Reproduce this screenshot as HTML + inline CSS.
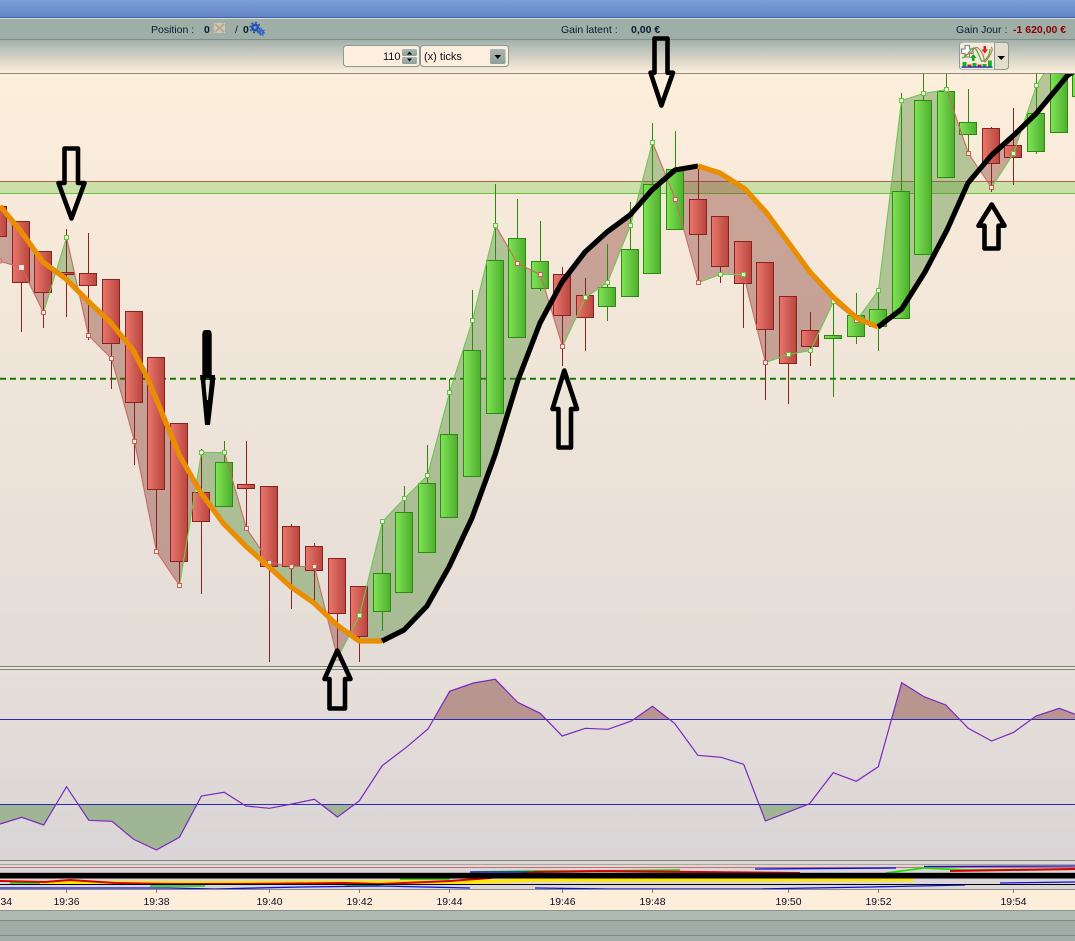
<!DOCTYPE html>
<html><head><meta charset="utf-8"><style>
html,body{margin:0;padding:0;background:#a0aca7;overflow:hidden}
svg{display:block}
text{font-family:"Liberation Sans",sans-serif;font-size:10.5px;fill:#0a1a30}
.b{font-weight:bold}
.f{font-size:11px;fill:#101020}
.ax{text-anchor:middle;font-size:10.4px;fill:#100820}
.r{fill:url(#gr);stroke:#8a2222;stroke-width:1}
.g{fill:url(#gg);stroke:#2a8c0e;stroke-width:1}
.mr{fill:#f5ece4;stroke:#cc5f58;stroke-width:1}
.mg{fill:#f5f5e6;stroke:#60c83c;stroke-width:1}
.ar{fill:none;stroke:#000;stroke-width:4.600;stroke-linejoin:round}
</style></head><body>
<svg width="1075" height="941" viewBox="0 0 1075 941" xmlns="http://www.w3.org/2000/svg">
<defs>
<linearGradient id="top" x1="0" y1="0" x2="0" y2="1"><stop offset="0" stop-color="#7da1d9"/><stop offset="1" stop-color="#6484c5"/></linearGradient>
<linearGradient id="tb" x1="0" y1="0" x2="0" y2="1"><stop offset="0" stop-color="#a3b1ab"/><stop offset="1" stop-color="#fdeedb"/></linearGradient>
<linearGradient id="pl" x1="0" y1="0" x2="0" y2="1"><stop offset="0" stop-color="#fdeedb"/><stop offset="1" stop-color="#e3dcd7"/></linearGradient>
<linearGradient id="p2" x1="0" y1="0" x2="0" y2="1"><stop offset="0" stop-color="#e7dfd9"/><stop offset="1" stop-color="#d9d4d6"/></linearGradient>
<linearGradient id="gr" x1="0" y1="0" x2="1" y2="0"><stop offset="0" stop-color="#ea776c"/><stop offset="1" stop-color="#b8463e"/></linearGradient>
<linearGradient id="gg" x1="0" y1="0" x2="1" y2="0"><stop offset="0" stop-color="#80e455"/><stop offset="1" stop-color="#4eae2e"/></linearGradient>
<linearGradient id="bt" x1="0" y1="0" x2="0" y2="1"><stop offset="0" stop-color="#aab8b3"/><stop offset="1" stop-color="#8e9f9a"/></linearGradient>
<clipPath id="c"><rect x="0" y="74" width="1075" height="592"/></clipPath>
</defs>

<!-- chrome -->
<rect x="0" y="0" width="1075" height="17" fill="url(#top)"/>
<rect x="0" y="17" width="1075" height="1" fill="#3f60ae"/>
<rect x="0" y="18" width="1075" height="1" fill="#d6ddd9"/>
<rect x="0" y="19" width="1075" height="20" fill="#a0aea8"/>
<rect x="0" y="39" width="1075" height="1" fill="#808c86"/>
<rect x="0" y="40" width="1075" height="33" fill="url(#tb)"/>
<rect x="0" y="73" width="1075" height="1" fill="#8a8a80"/>

<text x="151" y="33">Position :</text>
<text x="204" y="33" class="b">0</text>
<rect x="214" y="23" width="11" height="10" fill="#d2c8b4"/>
<path d="M215 24l9 8M224 24l-9 8" stroke="#b3a996" stroke-width="2"/>
<text x="235" y="33">/</text>
<text x="243" y="33" class="b">0</text>
<circle cx="255" cy="27.500" r="2.800" fill="#6a98d8" stroke="#2450b0" stroke-width="2.400"/>
<circle cx="255" cy="27.500" r="5" fill="none" stroke="#2450b0" stroke-width="1.400" stroke-dasharray="2 1.900"/>
<circle cx="261.500" cy="32.200" r="1.800" fill="#6a98d8" stroke="#3060c0" stroke-width="1.600"/>
<circle cx="261.500" cy="32.200" r="3.200" fill="none" stroke="#3060c0" stroke-width="1" stroke-dasharray="1.500 1.300"/>
<text x="561" y="33">Gain latent :</text>
<text x="631" y="33" class="b">0,00 €</text>
<text x="956" y="33">Gain Jour :</text>
<text x="1013" y="33" class="b" style="fill:#8a0000">-1 620,00 €</text>

<!-- spinner + combo -->
<rect x="343.500" y="45.500" width="76" height="21" rx="3" fill="#fdeedd" stroke="#8a9a94"/>
<text class="f" x="400.500" y="60" text-anchor="end">110</text>
<rect x="402" y="49" width="15" height="7" rx="1.500" fill="url(#bt)"/>
<rect x="402" y="57" width="15" height="7" rx="1.500" fill="url(#bt)"/>
<path d="M407 54.500h5l-2.500-3zM407 58.500h5l-2.500 3z" fill="#000"/>
<rect x="420.500" y="45.500" width="88" height="21" rx="3" fill="#fdeedd" stroke="#8a9a94"/>
<text class="f" x="424" y="60">(x) ticks</text>
<rect x="490" y="49" width="15.500" height="15" rx="1.500" fill="url(#bt)"/>
<path d="M494.500 55h6.500l-3.250 4z" fill="#000"/>

<!-- icon button -->
<rect x="959.500" y="42.500" width="49" height="27" rx="3" fill="#e4dfcc" stroke="#8a9a94"/>
<path d="M960 45.500a3 3 0 0 1 3-3h31.500v27H963a3 3 0 0 1-3-3z" fill="#f3ecdc"/>
<line x1="994.500" y1="43" x2="994.500" y2="69" stroke="#8a9a94"/>
<path d="M997.500 56h7.500l-3.750 4z" fill="#000"/>
<path d="M965 45.500h4.500v3.500h3.500v4.500h-3.500v3.500H965v-3.500h-3.500V49H965z" fill="#fff" stroke="#8c8c8c" stroke-width="1.200"/>
<path d="M962 58q4-1 8-7t7 0 4 9 5-1 4-10" fill="none" stroke="#44b434" stroke-width="1.300"/>
<path d="M964 55q6 0 9-5t7 0 4 10 5-3 2-10" fill="none" stroke="#d06a5a" stroke-width="1.100"/>
<path d="M972 61v-3h-2l3.300-4 3.300 4h-2v3z" fill="#18a818"/>
<path d="M983.500 46v3.500h-2l3.300 4 3.300-4h-2V46z" fill="#d82020"/>
<path d="M962.500 62h4v4.500h-4zM972.500 63h4v3.500h-4zM982.500 64h4v2.500h-4zM988 60.500h3.800v6H988z" fill="#18b018"/>
<path d="M967.500 64.500h4v2h-4zM977.500 64.500h4v2h-4z" fill="#c82030"/>
<rect x="961.500" y="66.500" width="31" height="1.300" fill="#2030c8"/>

<!-- main panel -->
<rect x="0" y="74" width="1075" height="592" fill="url(#pl)"/>
<rect x="0" y="182" width="1075" height="11" fill="#cbdfa9"/>
<rect x="0" y="181" width="1075" height="1" fill="#b5604f"/>
<rect x="0" y="193" width="1075" height="1" fill="#6cc040"/>
<line x1="0" y1="378.800" x2="1075" y2="378.800" stroke="#137a00" stroke-width="2" stroke-dasharray="6 4"/>

<g clip-path="url(#c)">
<!-- clouds -->
<g fill="rgba(132,58,48,.4)">
<path d="M0 261 21.700 267.300 43.300 312.300 55.900 271.300 43 262 20 230 0 206Z"/>
<path d="M78.400 291 88.300 335.300 111.300 358.300 134.300 441.300 156.300 551.300 179.300 585.300 196 484 179.300 455 156.700 400 133 350 111 323 88 301Z"/>
<path d="M326.500 615 337.300 658 349.700 634 337 625Z"/>
<path d="M549.800 305.400 562.300 346.300 585.300 297.300 607.300 282.300 630.300 225.300 634.200 210.600 630 215 607 232 585 252 562 282Z"/>
<path d="M666.500 177.600 675.300 199.300 698.300 282.300 720.300 274.300 743.300 274.300 765.300 362.300 788.300 354.300 810.300 350.300 833.300 301.300 856.300 320.300 857.600 318.500 856.700 318 833 297 810 272 788 242 766.700 213 745 189 720 173 698 166 675 170Z"/>
<path d="M979.500 169.800 991.300 187.300 1013.300 153.300 1022 127.500 1013 136 991.700 155Z"/>
</g>
<g fill="rgba(77,137,50,.4)">
<path d="M55.900 271.300 66.300 237.300 78.400 291 66 279Z"/>
<path d="M196 484 201.300 452.300 224.300 452.300 246.300 528.300 269.300 562.300 291.300 566.300 314.300 566.300 326.500 615 314 603 291 587 269 567 246.700 547 223 523 201 493Z"/>
<path d="M349.700 634 359.300 615.300 382.300 521.300 404.300 498.300 427.300 475.300 449.300 392.300 472.300 320.300 495.300 225.300 517.300 263.300 540.300 274.300 549.800 305.400 540 323 518 380 495 455 472 518 449 567 427 606 404 630 382 641 359 641Z"/>
<path d="M634.200 210.600 652.300 142.300 666.500 177.600 652 190Z"/>
<path d="M857.600 318.500 878.300 290.300 901.300 100.300 923.300 93.300 946.300 89.300 968.300 153.300 979.500 169.800 968 183 947 230 925 272 901.700 309 878 327 856.700 318Z"/>
<path d="M1022 127.500 1036.300 85.300 1059 50 1100 50 1068 75 1036.700 113 1013 136Z"/>
</g>

<!-- wicks -->
<path fill="none" stroke="#8b2222" d="M21.500 221V332M43.500 251V328M66.500 229V317M88.500 233V340M111.500 279V389M134.500 311V465M156.500 357V552M179.500 423V585M201.500 449V594M246.500 441V528M269.500 486V662M291.500 524V609M314.500 543V601M337.500 558V660M359.500 586V662M562.500 267V366M585.500 278V351M698.500 165V282M720.500 216V283M743.500 241V328M765.500 262V400M788.500 296V404M810.500 312V366M991.500 127V192M1013.500 108V185"/>
<path fill="none" stroke="#2a8c0e" d="M224.500 441V462M382.500 521V631M404.500 486V593M427.500 445V553M449.500 379V518M472.500 290V477M495.500 184V414M517.500 199V338M540.500 221V291M607.500 244V321M630.500 202V297M652.500 123V274M675.500 131V230M833.500 300V397M856.500 293V344M878.500 290V351M901.500 93V319M923.500 74V255M946.500 74V178M968.500 89V153M1036.500 74V154M1059.500 74V133"/>

<!-- bodies -->
<g>
<rect class="r" x="-10.500" y="206.500" width="17" height="30"/>
<rect class="r" x="12.500" y="221.500" width="17" height="61"/>
<rect class="r" x="34.500" y="251.500" width="17" height="41"/>
<rect class="r" x="57.500" y="272.500" width="17" height="2"/>
<rect class="r" x="79.500" y="273.500" width="17" height="12"/>
<rect class="r" x="102.500" y="279.500" width="17" height="64"/>
<rect class="r" x="125.500" y="311.500" width="17" height="91"/>
<rect class="r" x="147.500" y="357.500" width="17" height="132"/>
<rect class="r" x="170.500" y="423.500" width="17" height="138"/>
<rect class="r" x="192.500" y="492.500" width="17" height="29"/>
<rect class="r" x="237.500" y="484.500" width="17" height="4"/>
<rect class="r" x="260.500" y="486.500" width="17" height="80"/>
<rect class="r" x="282.500" y="526.500" width="17" height="40"/>
<rect class="r" x="305.500" y="546.500" width="17" height="24"/>
<rect class="r" x="328.500" y="558.500" width="17" height="55"/>
<rect class="r" x="350.500" y="586.500" width="17" height="50"/>
<rect class="r" x="553.500" y="274.500" width="17" height="41"/>
<rect class="r" x="576.500" y="295.500" width="17" height="22"/>
<rect class="r" x="689.500" y="199.500" width="17" height="35"/>
<rect class="r" x="711.500" y="216.500" width="17" height="50"/>
<rect class="r" x="734.500" y="241.500" width="17" height="42"/>
<rect class="r" x="756.500" y="262.500" width="17" height="67"/>
<rect class="r" x="779.500" y="296.500" width="17" height="67"/>
<rect class="r" x="801.500" y="330.500" width="17" height="16"/>
<rect class="r" x="982.500" y="128.500" width="17" height="35"/>
<rect class="r" x="1004.500" y="145.500" width="17" height="12"/>
<rect class="g" x="215.500" y="462.500" width="17" height="44"/>
<rect class="g" x="373.500" y="573.500" width="17" height="38"/>
<rect class="g" x="395.500" y="512.500" width="17" height="80"/>
<rect class="g" x="418.500" y="483.500" width="17" height="69"/>
<rect class="g" x="440.500" y="434.500" width="17" height="83"/>
<rect class="g" x="463.500" y="350.500" width="17" height="126"/>
<rect class="g" x="486.500" y="260.500" width="17" height="153"/>
<rect class="g" x="508.500" y="238.500" width="17" height="99"/>
<rect class="g" x="531.500" y="261.500" width="17" height="27"/>
<rect class="g" x="598.500" y="287.500" width="17" height="19"/>
<rect class="g" x="621.500" y="249.500" width="17" height="47"/>
<rect class="g" x="643.500" y="184.500" width="17" height="89"/>
<rect class="g" x="666.500" y="169.500" width="17" height="60"/>
<rect class="g" x="824.500" y="335.500" width="17" height="3"/>
<rect class="g" x="847.500" y="315.500" width="17" height="21"/>
<rect class="g" x="869.500" y="309.500" width="17" height="17"/>
<rect class="g" x="892.500" y="191.500" width="17" height="127"/>
<rect class="g" x="914.500" y="100.500" width="17" height="154"/>
<rect class="g" x="937.500" y="91.500" width="17" height="86"/>
<rect class="g" x="959.500" y="122.500" width="17" height="12"/>
<rect class="g" x="1027.500" y="113.500" width="17" height="38"/>
<rect class="g" x="1050.500" y="60.500" width="17" height="72"/>
<rect class="g" x="1072.500" y="40.500" width="17" height="56"/>
</g>

<!-- price line segments -->
<path fill="none" stroke="#cc6a60" stroke-width="1.100" d="M-1 261 21.500 267.500 43.500 312.500M66.500 237.500 88.500 335.500 111.500 358.500 134.500 441.500 156.500 551.500 179.500 585.500M224.500 452.500 246.500 528.500 269.500 562.500 291.500 566.500 314.500 566.500 337.500 658M495.500 225.500 517.500 263.500 540.500 274.500 562.500 346.500M652.500 142.500 675.500 199.500 698.500 282.500M743.500 274.500 765.500 362.500M833.500 301.500 856.500 320.500M946.500 89.500 968.500 153.500 991.500 187.500"/>
<path fill="none" stroke="#6cc850" stroke-width="1.100" d="M43.500 312.500 66.500 237.500M179.500 585.500 201.500 452.500 224.500 452.500M337.500 658 359.500 615.500 382.500 521.500 404.500 498.500 427.500 475.500 449.500 392.500 472.500 320.500 495.500 225.500M562.500 346.500 585.500 297.500 607.500 282.500 630.500 225.500 652.500 142.500M698.500 282.500 720.500 274.500 743.500 274.500M765.500 362.500 788.500 354.500 810.500 350.500 833.500 301.500M856.500 320.500 878.500 290.500 901.500 100.500 923.500 93.500 946.500 89.500M991.500 187.500 1013.500 153.500 1036.500 85.500 1059 50"/>

<!-- markers -->
<g>
<rect class="mr" x="-3" y="259" width="4" height="4"/>
<rect class="mr" x="19.500" y="265.500" width="4" height="4" style="stroke:#f0d8d0"/>
<rect class="mr" x="41.500" y="310.500" width="4" height="4"/>
<rect class="mg" x="64.500" y="235.500" width="4" height="4"/>
<rect class="mr" x="86.500" y="333.500" width="4" height="4"/>
<rect class="mr" x="109.500" y="356.500" width="4" height="4"/>
<rect class="mr" x="132.500" y="439.500" width="4" height="4"/>
<rect class="mr" x="154.500" y="549.500" width="4" height="4"/>
<rect class="mr" x="177.500" y="583.500" width="4" height="4"/>
<rect class="mg" x="199.500" y="450.500" width="4" height="4"/>
<rect class="mg" x="222.500" y="450.500" width="4" height="4"/>
<rect class="mr" x="244.500" y="526.500" width="4" height="4"/>
<rect class="mr" x="267.500" y="560.500" width="4" height="4"/>
<rect class="mr" x="289.500" y="564.500" width="4" height="4"/>
<rect class="mr" x="312.500" y="564.500" width="4" height="4"/>
<rect class="mr" x="335.500" y="656" width="4" height="4"/>
<rect class="mg" x="357.500" y="613.500" width="4" height="4"/>
<rect class="mg" x="380.500" y="519.500" width="4" height="4"/>
<rect class="mg" x="402.500" y="496.500" width="4" height="4"/>
<rect class="mg" x="425.500" y="473.500" width="4" height="4"/>
<rect class="mg" x="447.500" y="390.500" width="4" height="4"/>
<rect class="mg" x="470.500" y="318.500" width="4" height="4"/>
<rect class="mg" x="493.500" y="223.500" width="4" height="4"/>
<rect class="mr" x="515.500" y="261.500" width="4" height="4"/>
<rect class="mr" x="538.500" y="272.500" width="4" height="4"/>
<rect class="mr" x="560.500" y="344.500" width="4" height="4"/>
<rect class="mg" x="583.500" y="295.500" width="4" height="4"/>
<rect class="mg" x="605.500" y="280.500" width="4" height="4"/>
<rect class="mg" x="628.500" y="223.500" width="4" height="4"/>
<rect class="mg" x="650.500" y="140.500" width="4" height="4"/>
<rect class="mr" x="673.500" y="197.500" width="4" height="4"/>
<rect class="mr" x="696.500" y="280.500" width="4" height="4"/>
<rect class="mg" x="718.500" y="272.500" width="4" height="4"/>
<rect class="mg" x="741.500" y="272.500" width="4" height="4"/>
<rect class="mr" x="763.500" y="360.500" width="4" height="4"/>
<rect class="mg" x="786.500" y="352.500" width="4" height="4"/>
<rect class="mg" x="808.500" y="348.500" width="4" height="4"/>
<rect class="mg" x="831.500" y="299.500" width="4" height="4"/>
<rect class="mr" x="854.500" y="318.500" width="4" height="4"/>
<rect class="mg" x="876.500" y="288.500" width="4" height="4"/>
<rect class="mg" x="899.500" y="98.500" width="4" height="4"/>
<rect class="mg" x="921.500" y="91.500" width="4" height="4"/>
<rect class="mg" x="944.500" y="87.500" width="4" height="4"/>
<rect class="mr" x="966.500" y="151.500" width="4" height="4"/>
<rect class="mr" x="989.500" y="185.500" width="4" height="4"/>
<rect class="mg" x="1011.500" y="151.500" width="4" height="4"/>
<rect class="mg" x="1034.500" y="83.500" width="4" height="4"/>
</g>

<!-- moving average -->
<g fill="none" stroke-width="5.200" stroke-linejoin="round">
<path stroke="#e88e00" d="M0 206 20 230 43 262 66 279 88 301 111 323 133 350 147 377 156.700 400 179.300 455 201 493 223 523 246.700 547 269 567 291 587 314 603 337 625 359 641 382 641"/>
<path stroke="#000" d="M382 641 404 630 427 606 449 567 472 518 495 455 518 380 540 323 562 282 585 252 607 232 630 215 652 190 675 170 698 166"/>
<path stroke="#e88e00" d="M698 166 720 173 745 189 766.700 213 788 242 810 272 833 297 856.700 318 878 327"/>
<path stroke="#000" d="M878 327 901.700 309 925 272 947 230 968 183 991.700 155 1013 136 1036.700 113 1068 75 1080 68"/>
</g>
</g>

<!-- lower panel -->
<rect x="0" y="666" width="1075" height="4" fill="#ece4dc"/>
<rect x="0" y="666" width="1075" height="1" fill="#7a8570"/>
<rect x="0" y="669" width="1075" height="1" fill="#7a8570"/>
<rect x="0" y="670" width="1075" height="190" fill="url(#p2)"/>

<path fill="#b99590" d="M433.800 719.300 449.700 691.300 473.500 683 495.200 679.300 517.600 702.300 540 713.300 546 719.300ZM633.800 719.300 652.400 706.300 669.400 719.300ZM891.100 719.300 901.700 682.700 924 696.700 945.800 705 959.600 719.300ZM1031.500 719.300 1036 716 1059.400 708.300 1075 714.300V719.300Z"/>
<path fill="#9fb594" d="M0 804.700H55.800L43.700 825 21.700 817.300 0 824ZM78.400 804.700H196.800L179.400 837.300 156.300 850 133.600 839.300 112 821.300 88.800 820.300ZM321.400 804.700H354.200L337.500 817ZM759.200 804.700H807L765.400 821Z"/>
<path stroke="#2b2bb4" stroke-width="1" d="M0 719.500H1075M0 804.500H1075"/>
<path fill="none" stroke="#7a28c0" stroke-width="1.200" d="M0 824 21.700 817.300 43.700 825 66.500 786.700 88.800 820.300 112 821.300 133.600 839.300 156.300 850 179.400 837.300 201.400 796 224.200 792.300 245.900 806 269.300 808.300 292 804 314.400 799.300 337.500 817 359.200 801 382.200 765.700 406.300 747.300 428 729 449.700 691.300 473.500 683 495.200 679.300 517.600 702.300 540.200 713.300 562.200 736 585.300 728.300 608 729.300 631.400 721 652.400 706.300 674.500 723.300 697.900 755.300 721 757.300 743.700 764.300 765.400 821 809.500 803.700 833.200 772.700 856.300 781.300 878.300 766.700 901.700 682.700 924 696.700 945.800 705 968.200 728.300 991.600 741 1013.700 732.300 1036 716 1059.400 708.300 1075 714.300"/>

<!-- oscillator strip -->
<rect x="0" y="860" width="1075" height="1" fill="#7a8570"/>
<rect x="0" y="861" width="1075" height="28" fill="#dcd6d8"/>
<rect x="0" y="864" width="1075" height="1" fill="#a8a89a"/>
<rect x="0" y="867" width="1075" height="1" fill="#c87070"/>
<g fill="none">
<path stroke="#22c800" stroke-width="1.500" d="M10 883 45 883M150 886 205 886M345 885 380 885M400 879 450 879M470 872 535 871 600 871 680 870"/>
<path stroke="#1010e0" stroke-width="1.300" d="M0 888 60 888 170 888 215 889 300 887 380 886 470 888M470 872 540 872M535 888 610 889 755 889 870 887 965 885M755 869 896 868M924 866.500 1075 866"/>
<path stroke="#22e000" stroke-width="1.800" d="M886 873 924 868 965 870 1075 869"/>
<path stroke="#ffe800" stroke-width="3.600" d="M40 882.500 200 883 470 882 535 880 914 879.500"/>
<path stroke="#d80000" stroke-width="2" d="M0 881 45 882 70 880 115 883 170 884 240 884 345 883 380 884 450 881 490 878 535 872 600 871 800 873M950 871 1075 869"/>
</g>
<rect x="0" y="872.800" width="1075" height="5.700" fill="#000"/>
<rect x="0" y="884" width="1075" height="1" fill="#000"/>
<path d="M1000 883 1075 882" stroke="#1010e0" stroke-width="1.300" fill="none"/>

<!-- axis -->
<rect x="0" y="889" width="1075" height="21" fill="#fdeedb"/>
<rect x="0" y="889" width="1075" height="1" fill="#8a8f88"/>
<path stroke="#7a8078" d="M66.500 889V893M156.500 889V893M269.500 889V893M359.500 889V893M449.500 889V893M562.500 889V893M652.500 889V893M788.500 889V893M878.500 889V893M1013.500 889V893"/>
<text class="ax" x="-1" y="905">19:34</text>
<text class="ax" x="66.500" y="905">19:36</text>
<text class="ax" x="156.500" y="905">19:38</text>
<text class="ax" x="269.500" y="905">19:40</text>
<text class="ax" x="359.500" y="905">19:42</text>
<text class="ax" x="449.500" y="905">19:44</text>
<text class="ax" x="562.500" y="905">19:46</text>
<text class="ax" x="652.500" y="905">19:48</text>
<text class="ax" x="788.500" y="905">19:50</text>
<text class="ax" x="878.500" y="905">19:52</text>
<text class="ax" x="1013.500" y="905">19:54</text>
<rect x="0" y="910" width="1075" height="1" fill="#8a938e"/>
<rect x="0" y="911" width="1075" height="9" fill="#aeb9b3"/>
<rect x="0" y="920" width="1075" height="1" fill="#7f8a85"/>
<rect x="0" y="921" width="1075" height="14" fill="#a0aca7"/>
<rect x="0" y="935" width="1075" height="1" fill="#7f8a85"/>
<rect x="0" y="936" width="1075" height="5" fill="#a0aca7"/>

<!-- drawn arrows -->
<path class="ar" d="M64.500 148.500H78V183H84.500L71.500 218.500 58.500 183H64.500Z"/>
<path class="ar" d="M654.500 38.500H667.500V72.700H673L661.400 105.500 650.500 72.700H654.500Z"/>
<path class="ar" d="M337.300 650.500 350.500 679H345V708.500H329.500V679H324.500Z"/>
<path class="ar" d="M564.300 370.500 577 409H571V447.500H558.500V409H552.500Z"/>
<path class="ar" d="M991.700 204.500 1004.500 225.700H998.500V248.500H984.500V225.700H978.500Z"/>
<path d="M202.300 335Q202.300 330 205 330H209Q211.700 330 211.700 335V375H215V382L210 425H205L201 382 200 375H202.300Z" fill="#000"/>
<path d="M205.300 380H210L209 390 208 400H207L206 390Z" fill="#e9dfd8"/>
<rect x="206" y="378" width="3" height="1.800" fill="#137a00"/>
</svg>
</body></html>
